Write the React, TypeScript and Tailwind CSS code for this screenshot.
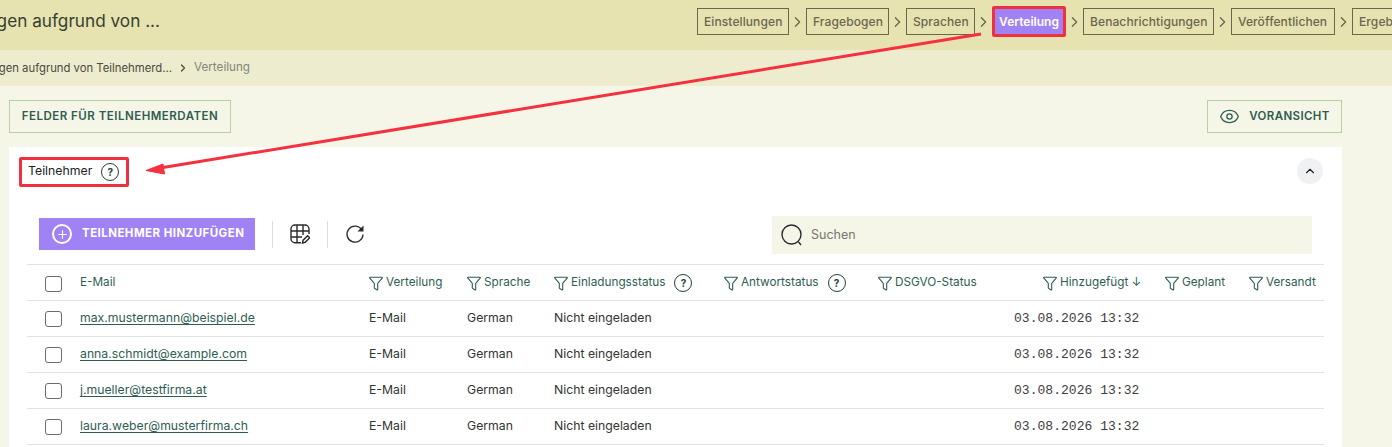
import React from 'react';
import { ChevronRight, ChevronUp, Eye, Plus } from 'lucide-react';

const steps = [
  { label: 'Einstellungen', width: 'w-[92px]' },
  { label: 'Fragebogen', width: 'w-[83px]' },
  { label: 'Sprachen', width: 'w-[69px]' },
  { label: 'Verteilung', width: 'w-[74px]' },
  { label: 'Benachrichtigungen', width: 'w-[131px]' },
  { label: 'Veröffentlichen', width: 'w-[104px]' },
  { label: 'Ergebnisse', width: 'w-[84px]' },
];
const emails = ['max.mustermann@beispiel.de', 'anna.schmidt@example.com', 'j.mueller@testfirma.at', 'laura.weber@musterfirma.ch'];
const gridCols = 'grid grid-cols-[53px_289px_98px_87px_170px_154px_136px_151px_84px_75px] items-center';

const FilterIcon = () => (
  <svg viewBox="0 0 14 15" className="w-[14px] h-[15px] shrink-0 mr-[3px]" fill="none" stroke="#2f5d56" strokeWidth="1.1" strokeLinejoin="round">
    <path d="M1 1.2h12c.4 0 .5.4.3.7L8.7 7.4v6.2c0 .3-.3.4-.5.3l-2.5-1.4c-.2-.1-.4-.3-.4-.5V7.4L.7 1.9c-.2-.3-.1-.7.3-.7z" />
  </svg>
);

const HelpIcon = () => (
  <span className="ml-[9px] w-[18px] h-[18px] shrink-0 rounded-full border-[1.5px] border-[#23403c] flex items-center justify-center text-[10px] font-bold text-[#23403c]">?</span>
);

const Checkbox = () => <span className="block w-[17px] h-[16px] ml-[18px] mt-[1px] rounded-[3px] border border-[#6b6b6b] bg-white" />;

const HeaderCell = ({ label, help, className }: { label: string; help?: boolean; className?: string }) => (
  <div className={`flex items-center ${className ?? ''}`}>
    <FilterIcon />
    <span>{label}</span>
    {help && <HelpIcon />}
  </div>
);

const Annotations = () => (
  <svg className="absolute inset-0 pointer-events-none" width="1392" height="447" fill="none">
    <path d="M981 34L160 168" stroke="#f5303f" strokeWidth="3" />
    <path d="M146 170.500L163 164L164.500 174z" fill="#f5303f" stroke="#f5303f" strokeWidth="1" />
  </svg>
);

export default function App() {
  return (
    <div className="relative w-[1392px] h-[447px] overflow-hidden bg-[#f5f5e8] font-['Inter','Noto_Sans',sans-serif] text-[#333]">
      {/* top bar */}
      <div className="h-[50px] bg-[#e6e3b0] flex items-start">
        <div className="w-[160px] h-[42px] shrink-0 flex justify-end items-center overflow-hidden whitespace-nowrap text-[17.200px] text-[#37412f]">
          Einladungen aufgrund von ...
        </div>
        <div className="ml-[537px] mt-[6px] flex items-center shrink-0">
          {steps.map((step, i) => (
            <React.Fragment key={step.label}>
              {i > 0 && (
                <span className="w-[17px] flex justify-center">
                  <ChevronRight size={20} strokeWidth={1.800} className="text-[#6a6650]" />
                </span>
              )}
              {step.label === 'Verteilung' ? (
                <span className={`${step.width} h-[31px] flex items-center justify-center bg-[#a182f5] text-white text-[12px] font-semibold border-[3px] border-[#f0303f] rounded-[2px]`}>
                  {step.label}
                </span>
              ) : (
                <span className={`${step.width} h-[27px] pl-[6px] flex items-center border border-[#6a6650] text-[12px] tracking-[0.1px] font-medium text-[#6a6650] whitespace-nowrap overflow-hidden`}>
                  {step.label}
                </span>
              )}
            </React.Fragment>
          ))}
        </div>
      </div>

      {/* breadcrumb */}
      <div className="h-[36px] bg-[#edecce] flex items-center text-[11.700px]">
        <div className="w-[172px] shrink-0 flex justify-end overflow-hidden whitespace-nowrap text-[11.300px] text-[#4a4a3a]">
          Einladungen aufgrund von Teilnehmerd...
        </div>
        <ChevronRight size={12} strokeWidth={2.500} className="ml-[5px] text-[#4a4a3a]" />
        <span className="ml-[5px] text-[#85857a]">Verteilung</span>
      </div>

      {/* content */}
      <div className="w-[1333px] ml-[9px] pt-[14px]">
        <div className="flex justify-between">
          <button className="h-[33px] w-[222px] flex items-center justify-center border border-[#b8d0a4] text-[11.500px] font-semibold tracking-[0.5px] text-[#2f5d50]">
            FELDER FÜR TEILNEHMERDATEN
          </button>
          <button className="h-[33px] w-[135px] flex items-center justify-center gap-[9px] border border-[#b8d0a4] text-[11.500px] font-semibold tracking-[0.4px] text-[#2f5d50]">
            <Eye size={21} strokeWidth={1.500} />
            VORANSICHT
          </button>
        </div>

        <div className="mt-[14px] bg-white h-[320px]">
          <div className="h-[71px] flex items-start">
            <div className="ml-[10px] mt-[10px] w-[110px] h-[30px] pl-[8px] flex items-center border-[3px] border-[#f0303f] rounded-[2px] text-[12.300px] text-[#222]">
              <span className="-ml-[2px] -mt-[2px]">Teilnehmer</span>
              <HelpIcon />
            </div>
            <span className="ml-auto mr-[19px] mt-[11px] w-[26px] h-[26px] rounded-full bg-[#f0f1f3] flex items-center justify-center">
              <ChevronUp size={14} strokeWidth={2} className="text-[#222]" />
            </span>
          </div>

          {/* toolbar */}
          <div className="h-[46px] flex items-start pl-[30px] pr-[30px]">
            <button className="h-[32px] w-[216px] flex items-center pl-[13px] bg-[#a182f5] text-white text-[11.500px] font-bold tracking-[0.45px]">
              <span className="w-[20px] h-[20px] rounded-full border-2 border-white flex items-center justify-center mr-[10px]">
                <Plus size={13} strokeWidth={2.200} />
              </span>
              TEILNEHMER HINZUFÜGEN
            </button>
            <span className="ml-[17px] mt-[3px] w-px h-[27px] bg-[#ddd]" />
            <svg viewBox="0 0 20 20" className="ml-[17px] mt-[6px] w-[20px] h-[20px]" fill="none" stroke="#2b2b2b" strokeWidth="1.400">
              <path d="M11 18.800H5a4 4 0 0 1-4-4V5a4 4 0 0 1 4-4h10a4 4 0 0 1 4 4v5" />
              <path d="M1 7h18M1 13h11M7 1v17.800M13 1v10" />
              <path d="M12.500 19l.6-2.800 4.500-4.500 2.100 2.100-4.500 4.500z" fill="#fff" />
            </svg>
            <span className="ml-[17px] mt-[3px] w-px h-[27px] bg-[#ddd]" />
            <svg viewBox="0 0 20 20" className="ml-[17px] mt-[6px] w-[20px] h-[20px]" fill="none" stroke="#2b2b2b" strokeWidth="1.300">
              <path d="M16.500 5.500A8 8 0 1 0 18 10.500" />
              <path d="M18.500 1.500v6h-6z" fill="#2b2b2b" stroke="none" />
            </svg>
            <div className="ml-auto -mt-[2px] w-[540px] h-[38px] bg-[#f5f5e8] flex items-center pl-[9px] text-[12.500px] text-[#77776f]">
              <svg viewBox="0 0 22 23" className="w-[22px] h-[23px] mr-[8px]" fill="none" stroke="#2b2b2b" strokeWidth="1.400">
                <circle cx="10.500" cy="10.500" r="9.500" />
                <path d="M17.500 18l2.500 3" />
              </svg>
              Suchen
            </div>
          </div>

          {/* table */}
          <div className="ml-[18px] w-[1297px] text-[12.250px]">
            <div className={`${gridCols} h-[37px] pt-[1px] border-y border-[#e2e2e2] text-[11.750px] text-[#2f5d56]`}>
              <Checkbox />
              <div>E-Mail</div>
              <HeaderCell label="Verteilung" />
              <HeaderCell label="Sprache" />
              <HeaderCell label="Einladungsstatus" help />
              <HeaderCell label="Antwortstatus" help />
              <HeaderCell label="DSGVO-Status" />
              <div className="pl-[29px] flex items-center">
                <FilterIcon />
                <span>Hinzugefügt</span>
                <span className="ml-[3px]">↓</span>
              </div>
              <HeaderCell label="Geplant" />
              <HeaderCell label="Versandt" />
            </div>
            {emails.map((email) => (
              <div key={email} className={`${gridCols} h-[36px] border-b border-[#e2e2e2]`}>
                <Checkbox />
                <a className="underline text-[#2f5d56] underline-offset-2">{email}</a>
                <div>E-Mail</div>
                <div>German</div>
                <div>Nicht eingeladen</div>
                <div />
                <div />
                <div className="pt-[1px] font-['Liberation_Mono',monospace] text-[13px] tracking-[0.03px] text-[#3d3d3d]">03.08.2026 13:32</div>
                <div />
                <div />
              </div>
            ))}
          </div>
        </div>
      </div>

      <Annotations />
    </div>
  );
}
